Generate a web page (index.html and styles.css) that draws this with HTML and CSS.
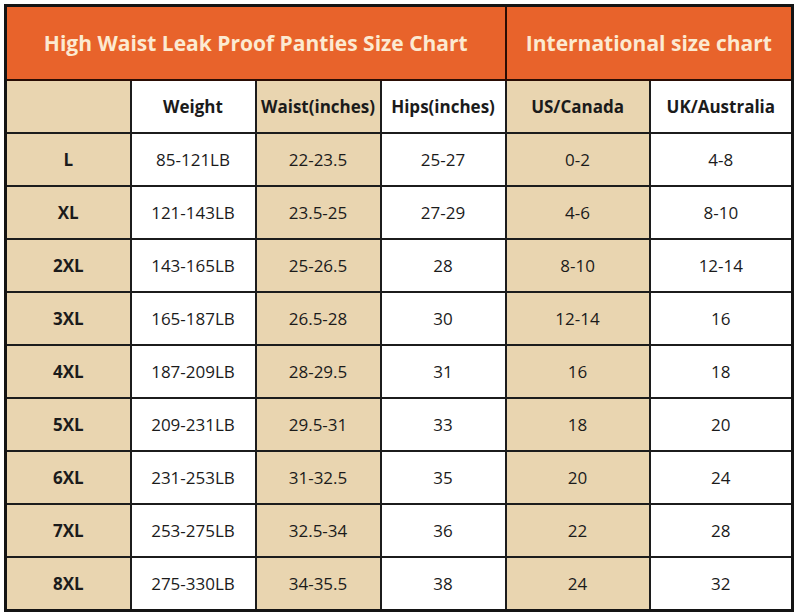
FILE: index.html
```html
<!DOCTYPE html>
<html>
<head>
<meta charset="utf-8">
<link rel="stylesheet" href="styles.css">
</head>
<body>
<table class="chart">
  <colgroup>
    <col class="c1"><col class="c2"><col class="c3"><col class="c4"><col class="c5"><col class="c6">
  </colgroup>
  <tr class="title-row">
    <th colspan="4" class="title">High Waist Leak Proof Panties Size Chart</th>
    <th colspan="2" class="title">International size chart</th>
  </tr>
  <tr class="head-row">
    <th class="tan"></th>
    <th>Weight</th>
    <th class="tan">Waist(inches)</th>
    <th>Hips(inches)</th>
    <th class="tan">US/Canada</th>
    <th>UK/Australia</th>
  </tr>
  <tr><th class="tan">L</th><td>85-121LB</td><td class="tan">22-23.5</td><td>25-27</td><td class="tan">0-2</td><td>4-8</td></tr>
  <tr><th class="tan">XL</th><td>121-143LB</td><td class="tan">23.5-25</td><td>27-29</td><td class="tan">4-6</td><td>8-10</td></tr>
  <tr><th class="tan">2XL</th><td>143-165LB</td><td class="tan">25-26.5</td><td>28</td><td class="tan">8-10</td><td>12-14</td></tr>
  <tr><th class="tan">3XL</th><td>165-187LB</td><td class="tan">26.5-28</td><td>30</td><td class="tan">12-14</td><td>16</td></tr>
  <tr><th class="tan">4XL</th><td>187-209LB</td><td class="tan">28-29.5</td><td>31</td><td class="tan">16</td><td>18</td></tr>
  <tr><th class="tan">5XL</th><td>209-231LB</td><td class="tan">29.5-31</td><td>33</td><td class="tan">18</td><td>20</td></tr>
  <tr><th class="tan">6XL</th><td>231-253LB</td><td class="tan">31-32.5</td><td>35</td><td class="tan">20</td><td>24</td></tr>
  <tr><th class="tan">7XL</th><td>253-275LB</td><td class="tan">32.5-34</td><td>36</td><td class="tan">22</td><td>28</td></tr>
  <tr><th class="tan">8XL</th><td>275-330LB</td><td class="tan">34-35.5</td><td>38</td><td class="tan">24</td><td>32</td></tr>
</table>
</body>
</html>
```
FILE: styles.css
```css
html, body {
  margin: 0;
  padding: 0;
  background: #ffffff;
}
body {
  padding: 4px 0 0 4px;
  font-family: "Open Sans", "DejaVu Sans", sans-serif;
  color: #1b1b1b;
}
.chart {
  border-collapse: collapse;
  table-layout: fixed;
  width: 789px;
  border: 3px solid #141414;
}
.c1, .c2, .c3, .c4 { width: 125px; }
.c5 { width: 144px; }
.c6 { width: 143px; }
.chart th, .chart td {
  border: 2px solid #1c1c1c;
  text-align: center;
  vertical-align: middle;
  padding: 0;
  height: 51px;
  background: #ffffff;
  font-size: 17px;
  font-weight: 400;
}
.chart th {
  font-weight: 700;
}
.chart .tan {
  background: #e9d5b0;
}
.title-row .title {
  height: 72px;
  background: #e8632b;
  color: #fcead1;
  font-size: 21px;
  font-weight: 700;
  border-color: #2a0d04;
}
.head-row th {
  font-size: 17px;
}
```
